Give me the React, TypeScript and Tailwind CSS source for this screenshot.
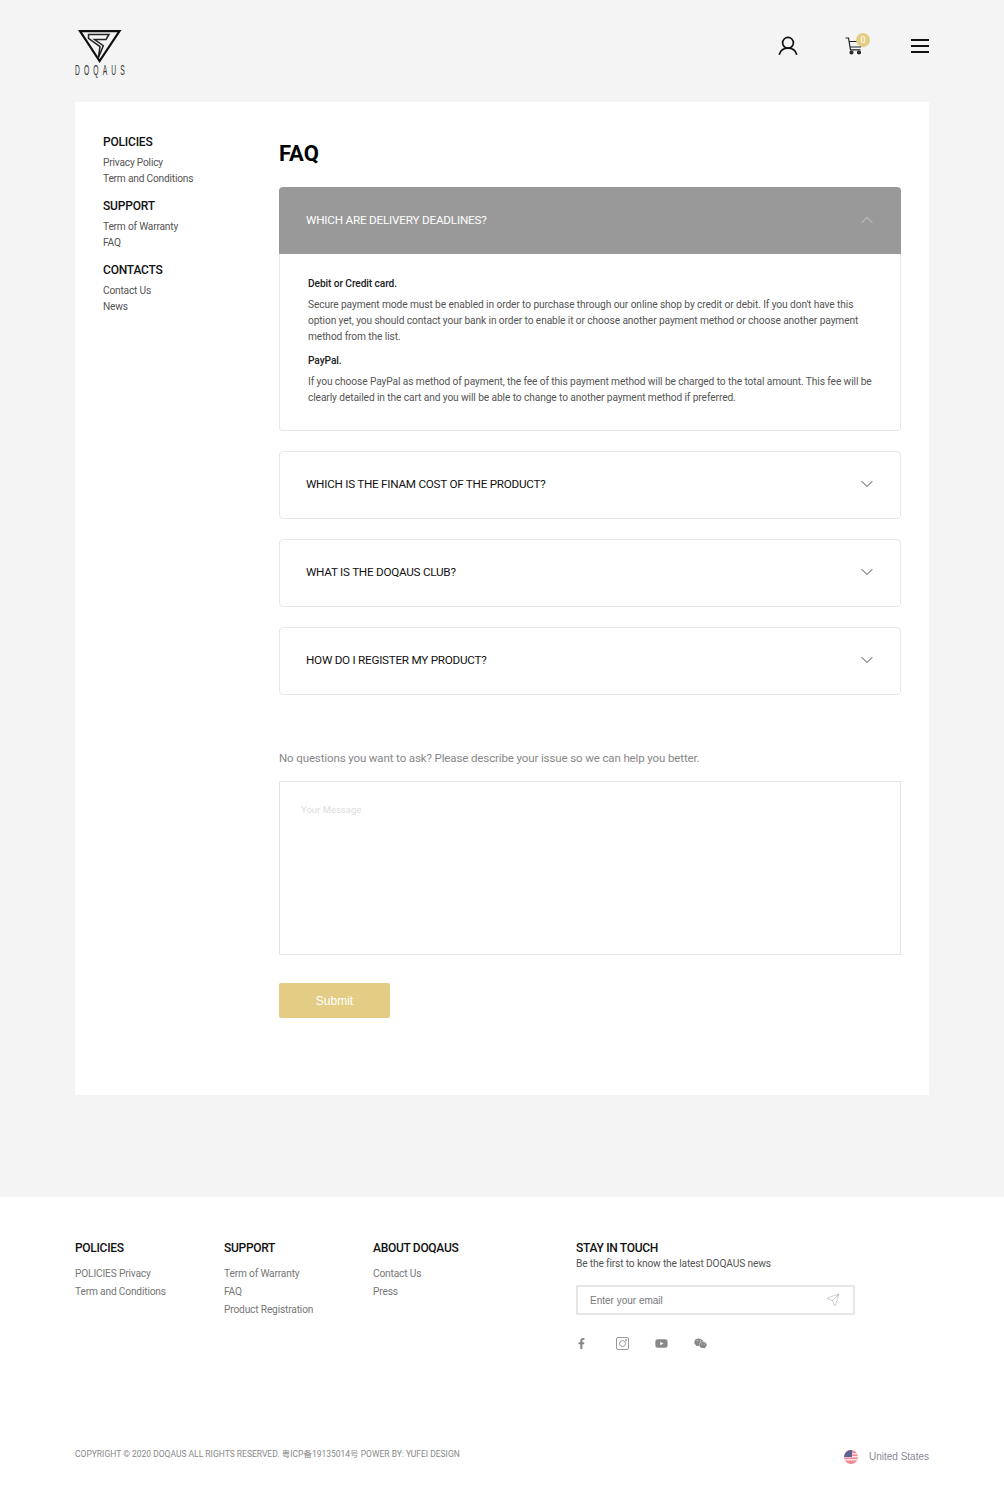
import React from 'react';
import { ChevronDown, ChevronUp, Send } from 'lucide-react';
import { FaFacebookF, FaYoutube, FaWeixin } from 'react-icons/fa';

const sideGroups = [
  { title: 'POLICIES', links: ['Privacy Policy', 'Term and Conditions'] },
  { title: 'SUPPORT', links: ['Term of Warranty', 'FAQ'] },
  { title: 'CONTACTS', links: ['Contact Us', 'News'] },
];

const footerGroups = [
  { title: 'POLICIES', links: ['POLICIES Privacy', 'Term and Conditions'], width: 'w-[149px]' },
  { title: 'SUPPORT', links: ['Term of Warranty', 'FAQ', 'Product Registration'], width: 'w-[149px]' },
  { title: 'ABOUT DOQAUS', links: ['Contact Us', 'Press'], width: 'w-[203px]' },
];

const questions = ['WHICH IS THE FINAM COST OF THE PRODUCT?', 'WHAT IS THE DOQAUS CLUB?', 'HOW DO I REGISTER MY PRODUCT?'];

const Logo = () => (
  <div className="flex flex-col w-[52px]">
    <svg width="50" height="36" viewBox="0 0 50 36" className="block">
      <path d="M5 3.2 H44.5 L24.6 33 Z" fill="none" stroke="#111" strokeWidth="2.2" />
      <path d="M13.5 6.5 H34 L31 11.5 H19.5 L28.3 17.7 L23.3 30 L25 18.7 L13.5 10.3 Z" fill="none" stroke="#222" strokeWidth="1.5" />
    </svg>
    <div className="h-[12px] w-[104px] text-[14px] leading-[12px] tracking-[8.6px] whitespace-nowrap text-[#333] font-['Liberation_Sans',sans-serif] origin-left scale-x-[0.48]">
      DOQAUS
    </div>
  </div>
);

const UserIcon = () => (
  <svg width="20" height="20" viewBox="0 0 20 20" fill="none" stroke="#111" strokeWidth="1.7">
    <circle cx="10" cy="6.8" r="5.4" />
    <path d="M1.2 18.8 C2.6 14 6 12.2 10 12.2 C14 12.2 17.4 14 18.8 18.8" />
  </svg>
);

const CartIcon = () => (
  <div className="relative w-[25px] h-[20px]">
    <svg width="18" height="19" viewBox="0 0 18 19" fill="none" stroke="#222" strokeWidth="1.2" className="absolute left-0 top-0">
      <path d="M0.5 1 H3.5 L5.5 12.8 H15.5" />
      <path d="M4 4.5 H16.5 L15.5 10 H5" />
      <circle cx="6.5" cy="15.5" r="1.5" fill="#333" />
      <circle cx="14" cy="15.5" r="1.5" fill="#333" />
    </svg>
    <span className="absolute left-[11px] -top-[4px] w-[14px] h-[14px] rounded-full bg-[#e3cd85] text-white text-[9px] leading-[14px] text-center">0</span>
  </div>
);

const InstagramIcon = () => (
  <svg width="13" height="13" viewBox="0 0 13 13" fill="none" stroke="#999" strokeWidth="1" className="ml-[29px]">
    <rect x="0.5" y="0.5" width="12" height="12" rx="1.5" />
    <circle cx="6.5" cy="6.5" r="3" />
    <circle cx="10" cy="3" r="0.5" fill="#999" />
  </svg>
);

export default function App() {
  return (
    <div className="w-[1004px] h-[1507px] bg-[#f4f4f4] font-['Roboto','Noto_Sans_CJK_SC',sans-serif] text-[#111]">
      <header className="h-[102px] pl-[75px] pr-[75px] pt-[28px] flex justify-between items-start">
        <Logo />
        <div className="flex items-start pt-[8px]">
          <UserIcon />
          <div className="ml-[47px] mt-[1px]"><CartIcon /></div>
          <div className="ml-[41px] mt-[3px] w-[18px] flex flex-col gap-[4px]">
            <span className="h-[2px] bg-[#111]" />
            <span className="h-[2px] bg-[#111]" />
            <span className="h-[2px] bg-[#111]" />
          </div>
        </div>
      </header>

      <main className="mx-[75px] h-[993px] bg-white flex">
        <aside className="w-[204px] pl-[28px] pt-[32px]">
          {sideGroups.map((g) => (
            <div key={g.title} className="mb-[10.5px]">
              <h3 className="text-[12px] leading-[16px] font-medium tracking-[-0.2px] text-[#111]">{g.title}</h3>
              <ul className="mt-[4.5px]">
                {g.links.map((l) => (
                  <li key={l} className="text-[10.2px] leading-[16.5px] tracking-[-0.2px] text-[#555]">{l}</li>
                ))}
              </ul>
            </div>
          ))}
        </aside>

        <section className="w-[622px] pt-[38px]">
          <h1 className="text-[22px] leading-[28px] font-bold text-black">FAQ</h1>

          <div className="mt-[19px] h-[244px] flex flex-col">
            <div className="h-[67px] rounded-t-[4px] bg-[#999999] flex items-center justify-between pl-[27px] pr-[24px]">
              <span className="text-[11.7px] tracking-[-0.2px] text-white">WHICH ARE DELIVERY DEADLINES?</span>
              <ChevronUp size={20} strokeWidth={1} className="text-[#d8d8d8] -mt-[2px]" />
            </div>
            <div className="flex-1 border-x border-b border-[#e8e8e8] rounded-b-[4px] pl-[28px] pr-[26px] pt-[22px] text-[10.2px] leading-[16px] tracking-[-0.1px] text-[#555]">
              <p className="font-medium text-[#222]">Debit or Credit card.</p>
              <p className="mt-[5px]">
                Secure payment mode must be enabled in order to purchase through our online shop by credit or debit. If you don't have this option yet, you should contact your bank in order to enable it or choose another payment method or choose another payment method from the list.
              </p>
              <p className="mt-[8px] font-medium text-[#222]">PayPal.</p>
              <p className="mt-[5px]">
                If you choose PayPal as method of payment, the fee of this payment method will be charged to the total amount. This fee will be clearly detailed in the cart and you will be able to change to another payment method if preferred.
              </p>
            </div>
          </div>

          {questions.map((q) => (
            <div key={q} className="mt-[20px] h-[68px] border border-[#e8e8e8] rounded-[4px] flex items-center justify-between pl-[26px] pr-[23px]">
              <span className="text-[11.7px] tracking-[-0.25px] text-[#111] -mt-[1px]">{q}</span>
              <ChevronDown size={20} strokeWidth={1.1} className="text-[#333] -mt-[3px]" />
            </div>
          ))}

          <p className="mt-[54px] text-[11.5px] leading-[18px] tracking-[-0.12px] text-[#888]">
            No questions you want to ask? Please describe your issue so we can help you better.
          </p>
          <div className="mt-[14px] h-[174px] border border-[#e4e4e4] pl-[21px] pt-[21px] text-[9.5px] leading-[14px] text-[#dddddd]">
            Your Message
          </div>
          <button className="mt-[28px] w-[111px] h-[35px] rounded-[2px] bg-[#e3cd85] text-white text-[12px] font-['Liberation_Sans',sans-serif]">
            Submit
          </button>
        </section>
      </main>

      <footer className="mt-[102px] h-[310px] bg-white pl-[75px] pr-[75px] pt-[44px]">
        <div className="flex h-[200px]">
          {footerGroups.map((g) => (
            <div key={g.title} className={g.width}>
              <h4 className="text-[12px] leading-[14px] font-medium tracking-[-0.3px] text-[#111]">{g.title}</h4>
              <ul className="mt-[10px]">
                {g.links.map((l) => (
                  <li key={l} className="text-[10.2px] leading-[18px] tracking-[-0.17px] text-[#777]">{l}</li>
                ))}
              </ul>
            </div>
          ))}
          <div className="w-[279px]">
            <h4 className="text-[12px] leading-[14px] font-medium tracking-[-0.3px] text-[#111]">STAY IN TOUCH</h4>
            <p className="mt-[2px] text-[10.2px] leading-[14px] tracking-[-0.15px] text-[#555]">Be the first to know the latest DOQAUS news</p>
            <div className="mt-[14px] h-[30px] border-2 border-[#e6e6e6] flex items-center justify-between pl-[12px] pr-[13px]">
              <span className="text-[10px] text-[#777] font-['Liberation_Sans',sans-serif]">Enter your email</span>
              <Send size={14} strokeWidth={1} className="text-[#aaa]" />
            </div>
            <div className="mt-[22px] flex items-center text-[#888]">
              <FaFacebookF size={11} />
              <InstagramIcon />
              <FaYoutube size={13} className="ml-[26px]" />
              <FaWeixin size={13} className="ml-[26px]" />
            </div>
          </div>
        </div>
        <div className="mt-[8px] flex justify-between items-center">
          <p className="text-[8.5px] text-[#888] -mt-[4px]">COPYRIGHT © 2020 DOQAUS ALL RIGHTS RESERVED. 粤ICP备19135014号 POWER BY: YUFEI DESIGN</p>
          <div className="flex items-center">
            <svg width="14" height="14" viewBox="0 0 14 14" className="rounded-full">
              <rect width="14" height="14" fill="#f28b96" />
              <rect y="3" width="14" height="1.5" fill="#f9e3e5" />
              <rect y="6" width="14" height="1.5" fill="#f9e3e5" />
              <rect y="9" width="14" height="1.5" fill="#f9e3e5" />
              <rect width="8" height="7" fill="#5c6491" />
            </svg>
            <span className="ml-[11px] text-[10px] text-[#8a8a94] font-['Liberation_Sans',sans-serif]">United States</span>
          </div>
        </div>
      </footer>
    </div>
  );
}
